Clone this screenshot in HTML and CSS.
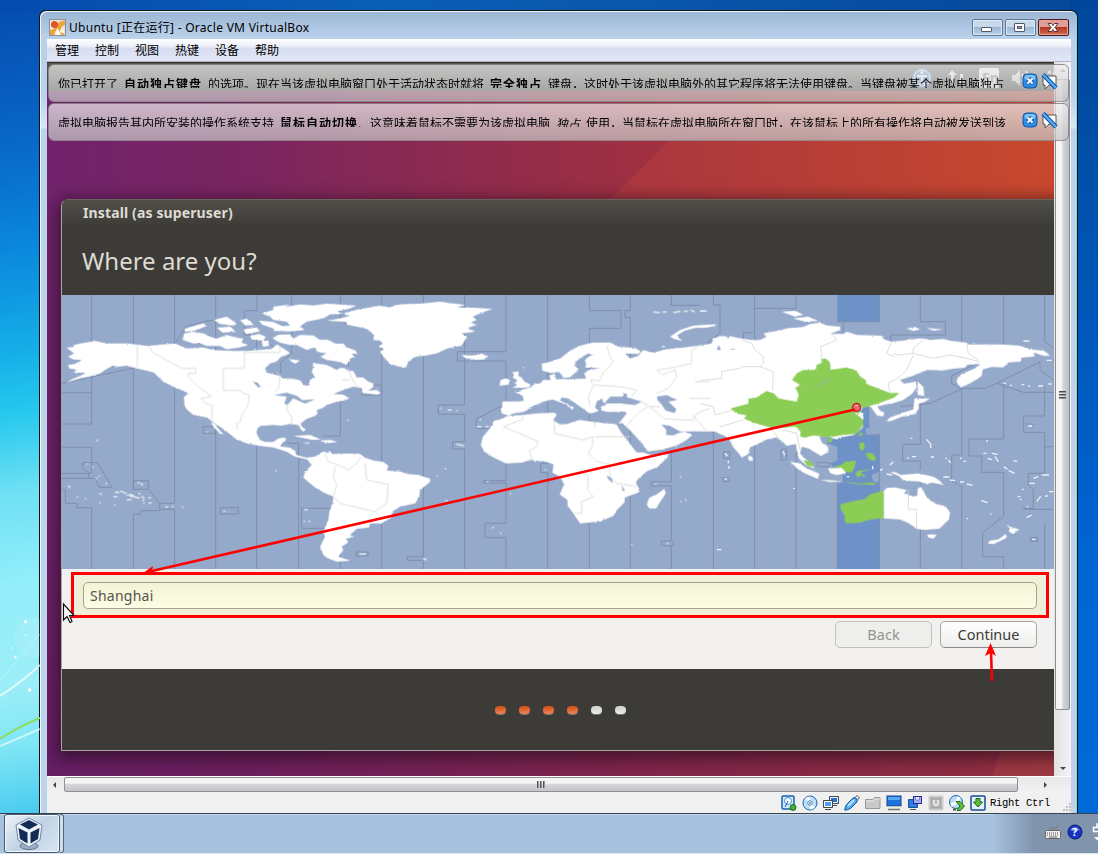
FILE: index.html
```
<!DOCTYPE html>
<html lang="zh-CN">
<head>
<meta charset="utf-8">
<title>Ubuntu - Oracle VM VirtualBox</title>
<link rel="stylesheet" href="styles.css">
</head>
<body>
<main class="desktop">
  <svg class="wallpaper" width="40" height="813" viewBox="0 0 40 813">
    <circle cx="34" cy="638" r="20" fill="#fff" opacity=".1"/>
    <g fill="none" stroke="#fff">
      <path d="M0 680Q18 660 40 634" opacity=".3"/><path d="M0 696Q22 682 40 665" stroke-width="2" opacity=".7"/><path d="M0 746Q20 738 40 729" stroke-width="2" opacity=".6"/>
    </g>
    <path d="M0 739Q18 727 40 718" fill="none" stroke="#8fdc58" stroke-width="2"/>
    <g fill="#fff"><circle cx="25.500" cy="621.500" r="1.600"/><circle cx="29.500" cy="690" r="1.800"/><circle cx="15.500" cy="657" r="1.200"/><circle cx="12" cy="648" r=".8"/><circle cx="26" cy="635" r=".8"/></g>
  </svg>
  <section class="window">
    <header class="titlebar">
      <svg class="app-icon" width="17" height="17" viewBox="0 0 17 17"><rect x=".5" y=".5" width="16" height="16" fill="#eee6dc" stroke="#8a8e96"/><path d="M1 16V11Q5 11 8 6Q11 1 16 2V6Q12 7 12 10Q12 13 16 16H12Q10 10 8 10Q6 13 5 16Z" fill="#eda33c"/><path d="M8 16Q6 12 9 9Q9 13 12 16Z" fill="#fff"/><circle cx="5.500" cy="5.500" r="3.500" fill="#df5429"/><circle cx="13" cy="12" r="2" fill="#fff6e0"/></svg>
      <h1>Ubuntu [正在运行] - Oracle VM VirtualBox</h1>
      <div class="controls">
        <button class="ctl"><svg width="29" height="15" viewBox="0 0 29 15"><rect x="9.500" y="7.500" width="10" height="4" rx=".5" fill="#fff" stroke="#50586e"/></svg></button>
        <button class="ctl"><svg width="29" height="15" viewBox="0 0 29 15"><rect x="9.500" y="3.500" width="10" height="8" rx=".5" fill="#fff" stroke="#50586e"/><rect x="12.500" y="6.500" width="4" height="2" fill="#8fa6c6" stroke="#50586e"/></svg></button>
        <button class="ctl close"><svg width="29" height="15" viewBox="0 0 29 15"><path d="M10 3.500h3.500l1.500 2 1.500-2H20l-3 4 3 4h-3.500l-1.500-2-1.500 2H10l3-4z" fill="#fff" stroke="#5c2f38"/></svg></button>
      </div>
    </header>
    <nav class="menubar"><span>管理</span><span>控制</span><span>视图</span><span>热键</span><span>设备</span><span>帮助</span></nav>
    <div class="client">
      <div class="guest">
        <div class="panel">
          <svg width="145" height="29" viewBox="0 0 145 29">
            <circle cx="13" cy="15" r="10" fill="#3c80c8"/><g stroke="#fff" stroke-width="2" fill="none"><circle cx="13" cy="15" r="8" stroke-width="1"/><path d="M8 13h10M13 12v6l-3 4M13 18l3 4"/></g><circle cx="13" cy="9.500" r="1.600" fill="#fff"/>
            <path d="M43 7l5 5h-3v9h-3v-9h-3zM51 11h3v10h-3z" fill="#eee"/>
            <rect x="70" y="5" width="20" height="20" rx="2" fill="#f2f2f2"/><text x="73" y="20" class="lang">En</text>
            <path d="M103 12h3l5-5v16l-5-5h-3z" fill="#ddd"/><g fill="none" stroke="#ddd" stroke-width="2"><path d="M113 11q3 4 0 8M117 8q5 7 0 14"/></g>
            <circle cx="142" cy="14" r="5" fill="none" stroke="#ddd" stroke-width="3" stroke-dasharray="3 2"/>
          </svg>
        </div>
        <section class="dialog">
          <header class="dialog-head"><h2>Install (as superuser)</h2><h3>Where are you?</h3></header>
          <svg class="map" width="992" height="274" viewBox="6 15 2976 822" preserveAspectRatio="none">
            <defs><filter id="coast" x="0" y="0" width="3000" height="860" filterUnits="userSpaceOnUse"><feTurbulence type="fractalNoise" baseFrequency=".11" numOctaves="3" seed="4" result="n"/><feDisplacementMap in="SourceGraphic" in2="n" scale="6" xChannelSelector="R" yChannelSelector="G"/></filter></defs>
            <rect x="6" y="15" width="2976" height="822" fill="#95a9ca"/>
            <path d="M2332 15H2458V95H2332ZM2410 345H2428V415H2418V435H2458V545L2435 555L2440 575H2458V837H2332V578L2350 575L2348 560L2310 520L2332 512V470L2300 460L2310 430L2390 410Z" fill="#6e92c8"/>
            <g class="zones">
              <path d="M95 15V402H6M6 308H95M6 472H95V550H6M6 565H105L118 592H156L112 518H68V535L86 548V565M6 600H16V640H50V653H95V837M220 15V598H265V572H220V598M265 598L299 640H344V15M299 640V662H243V672H220V837M344 658V837M299 658H344M467 15V837M591 15V62H553V135H590V837M695 15V190L662 218V250M591 135L660 185M841 15V90L870 110M841 330V438H790M965 15V837M841 700V837M716 590V837M716 500V590M716 460V500M716 460H680M430 410H465V430H430ZM6 280L230 232M480 653H535V672H480ZM725 655H815V715H725ZM888 786H924V798H888ZM345 160L378 110L430 95L465 90M640 90V70M865 230V205L890 185M905 285H965V315H905V285"/>
              <path transform="translate(960)" d="M130 15V800H82V811H130V837M254 15V345H175V373H254V455H218V477H254V837M378 15V185H232V213H378V340L288 388V415H330M378 415V572H310V579H378V700H315V743H378V837M503 15V520H482V548H503V837M628 15V62H723V115H628V837M751 15V62H735V82H751V837M874 15V46H960M874 485V575H813V588H874V753H845V767H880V753M874 767V837M980 165L1000 145"/>
              <path transform="translate(1920)" d="M40 15V45H60V130L20 160M40 420V837M164 15V150M288 15V55H164M164 440V837M288 480V837M130 150V128H160M412 95H430V130M538 15V95H412M538 430V837M412 575V837M661 15V95H736V135H572V155M661 340V463H608V513H661V540M661 550V837M785 15V160M785 297V495H755V573L785 590V837M911 15V165M911 280V447H807V498H845V547H911V678L848 728V800H911V837M1034 15V155L1060 175M1034 290V378H971V427H1034V550H985V585L1000 600V655H970V658H1062M1034 470H1060M1034 700V837M785 297L755 280V258L840 215M785 297L690 340L600 350M785 295H855L890 280L1020 215V240L1062 270M890 280L970 307H1062M978 402H998V413M415 435H538M245 477H260V510H243V477M352 518V530H388V518ZM68 563H88V575H68ZM992 743H1013V754H992ZM70 485H90V505H70Z"/>
            </g>
            <g class="land" filter="url(#coast)">
              <path d="M20 173L40 171 42 165 62 160 105 153 140 160 200 160 265 168 300 164 345 160 380 175 430 172 458 180 510 183 560 183 600 180 635 177 650 163 670 175 685 185 690 190 662 201 650 215 630 220 615 235 620 248 660 258 668 265 700 265 722 272 730 285 745 288 750 270 765 262 755 245 760 232 758 219 780 222 800 225 830 240 842 233 855 235 865 243 880 243 890 262 910 262 925 275 940 280 940 290 925 302 950 300 962 309 953 314 907 309 905 294 880 290 850 300 820 312 850 314 868 325 850 332 830 335 800 345 785 355 770 360 773 370 765 378 740 387 722 400 725 409 738 420 728 425 715 405 690 402 665 407 640 405 600 408 591 420 590 430 600 450 615 456 640 456 655 445 675 442 678 450 665 460 661 469 690 473 705 482 708 495 740 503 765 500 755 510 735 507 705 500 680 485 640 472 600 468 560 460 530 448 500 425 480 410 470 405 458 395 440 382 400 375 380 358 373 345 372 320 385 310 365 300 350 295 310 275 300 265 280 247 260 242 230 235 200 227 175 230 158 227 135 240 120 250 90 259 65 264 35 273 20 277 35 268 60 258 78 248 40 248 50 240 28 235 24 225 45 222 66 210 40 208 24 200 42 190Z"/>
              <path d="M452 395L465 402 478 420 492 433 480 430 462 413ZM368 150L372 131 397 125 430 130 450 140 470 146 500 135 530 143 550 145 545 158 565 165 538 172 500 178 480 168 440 168 422 160 400 160ZM374 116L430 100 440 108 405 122 375 125ZM462 90L500 80 530 100 522 107 480 102ZM470 113L510 110 528 124 488 128ZM540 90L560 86 582 105 555 106ZM550 118L590 112 600 124 558 132ZM570 137L598 132 617 140 610 152 575 148ZM605 70L640 60 680 50 720 43 760 46 800 41 850 44 890 47 865 57 830 64 850 71 810 73 790 85 740 95 720 110 735 120 690 124 640 123 645 110 690 107 680 95 640 90 630 80ZM598 92L640 96 675 112 640 115 605 103ZM637 145L655 134 690 133 700 146 720 135 760 136 780 150 803 149 825 160 850 161 857 171 886 181 892 190 875 192 885 201 870 207 860 225 840 216 800 210 780 200 800 190 772 186 765 172 740 180 710 165 690 165 660 158ZM685 207L720 211 705 222ZM604 151L625 152 628 168 610 170ZM640 50L690 43 670 53 640 60ZM375 295L388 308 360 298ZM700 438L750 435 782 448 758 450ZM780 451L812 450 832 456 797 460ZM728 458L748 457 745 461Z"/>
              <path d="M840 85L870 78 850 70 890 59 960 47 990 52 1012 43 1050 42 1080 41 1140 35 1215 45 1190 53 1240 53 1297 57 1258 71 1238 80 1250 90 1232 97 1250 104 1222 115 1247 125 1204 130 1222 141 1212 154 1204 167 1162 175 1130 190 1090 198 1065 200 1045 215 1038 232 1018 230 990 222 970 200 960 185 973 177 955 170 968 160 960 152 940 150 942 135 920 116 860 104 860 96 800 92Z"/>
              <path d="M740 507L765 500 787 486 812 484 815 492 870 490 900 492 915 503 940 511 970 516 985 527 981 542 1020 544 1042 552 1075 555 1110 566 1110 576 1080 600 1078 620 1065 640 1020 650 997 665 993 683 965 700 930 700 927 712 890 717 870 735 882 740 860 746 864 758 845 770 850 780 835 800 872 812 830 815 800 803 790 795 780 770 795 740 790 725 805 690 808 665 818 640 820 620 790 607 765 592 750 580 730 563 736 544 755 525Z"/>
              <path transform="translate(960)" d="M245 195L280 197 305 191 326 199 312 208 280 210 255 204ZM358 287L362 270 376 265 390 270 386 284ZM395 247L416 244 415 258 425 263 434 275 452 284 448 292 398 294 412 284 402 280 413 272 398 262 403 255Z"/>
              <path transform="translate(960)" d="M403 304L420 304 427 298 452 292 463 282 480 280 490 270 513 270 508 257 524 250 528 268 552 267 568 268 600 266 618 266 612 249 630 238 660 236 643 233 616 233 618 220 614 210 630 197 640 197 625 190 609 199 588 214 583 228 597 238 580 253 569 262 550 263 537 246 512 249 487 242 485 221 512 215 543 204 570 182 600 167 636 158 690 157 715 170 765 174 782 184 775 192 735 190 750 205 775 198 790 180 820 189 855 178 900 174 960 166 1005 159 1015 170 1010 180 1065 178 1040 160 996 158 997 145 1020 140 1045 145 1050 138 1070 143 1110 150 1140 150 1160 140 1150 130 1205 120 1220 115 1270 111 1290 102 1320 98 1340 106 1380 110 1381 120 1350 132 1390 132 1400 125 1430 135 1505 137 1512 148 1535 155 1575 151 1590 147 1628 145 1650 150 1690 147 1710 152 1760 158 1765 163 1860 163 1920 167 1950 178 1992 182 2010 197 1993 198 1960 187 1965 199 1925 203 1922 215 1885 217 1870 232 1835 231 1808 238 1805 258 1775 278 1742 292 1733 282 1730 268 1745 252 1790 233 1800 222 1762 224 1755 233 1720 236 1690 241 1640 240 1600 257 1560 270 1572 281 1607 275 1610 292 1597 310 1570 330 1535 341 1524 342 1488 350 1493 361 1510 368 1511 378 1493 378 1488 362 1478 350 1450 350 1438 365 1450 370 1450 388 1440 395 1449 404 1448 413 1423 435 1380 442 1370 448 1327 435 1319 442 1326 459 1343 468 1346 485 1323 498 1305 487 1287 476 1265 470 1260 491 1280 510 1297 522 1303 535 1280 527 1257 506 1250 480 1248 462 1220 468 1210 457 1190 442 1160 448 1130 463 1110 472 1105 492 1085 503 1077 491 1060 472 1048 450 1035 438 1015 430 1005 424 980 424 900 424 870 408 844 403 859 420 858 435 880 436 897 429 913 425 937 435 920 450 893 465 850 478 803 484 790 465 773 446 752 423 727 399 715 402 740 370 735 365 685 366 665 362 662 350 680 344 670 338 666 325 650 335 645 352 655 362 642 368 628 370 613 358 600 350 587 340 565 325 545 322 540 331 565 344 582 352 577 360 561 345 535 335 517 328 490 335 455 350 440 361 430 366 398 370 387 378 366 370 364 360 368 334 413 334 431 333 428 318Z"/>
              <path transform="translate(960)" d="M338 400L342 392 362 388 382 378 430 375 470 370 528 368 529 378 519 390 540 404 562 402 575 397 600 390 640 396 660 398 708 402 724 428 745 454 760 475 770 487 790 487 813 495 865 491 862 502 834 530 800 544 773 568 767 578 777 595 776 607 735 622 733 637 711 660 700 678 660 694 600 700 580 670 563 648 562 630 539 613 552 583 540 560 517 548 521 523 500 516 450 510 425 518 378 520 340 502 313 485 302 465 309 440 329 416ZM853 596L857 610 828 655 808 655 800 643 808 623 830 613Z"/>
              <path transform="translate(1920)" d="M653 274L670 291 673 318 653 315ZM643 326L690 325 675 335 656 341 656 355 647 370 629 377 605 380 576 392 558 395 570 382 610 368 640 358 642 338ZM510 348L530 346 540 362 553 368 548 379 530 375ZM35 158L52 155 60 138 81 139 80 152 95 160 108 142 120 160 100 175 65 185 58 168 38 165ZM144 498L157 500 159 513 145 510ZM270 515L300 520 320 535 358 551 354 567 315 550 292 536ZM360 569L400 571 430 576 385 575ZM384 535L440 532 436 552 407 555 390 549ZM570 547L585 546 602 555 655 550 700 560 718 571 730 585 696 578 682 582 655 574 611 572 596 558ZM620 115L645 111 660 118 640 123ZM678 114L730 118 700 122ZM245 65L285 62 310 74 285 80ZM278 85L325 80 355 93 315 95ZM870 752L895 748 918 732 920 743 882 762 863 760ZM918 703L930 710 958 718 940 732 925 724 930 716ZM681 733L710 733 700 746 685 742ZM50 103L20 104 -20 107 -60 120 -90 140 -78 147 -52 153 -64 143 -68 135 -45 122 -15 114 20 113 45 108Z"/>
              <path transform="translate(1920)" d="M551 603L560 594 585 592 620 600 612 611 640 619 652 617 653 596 662 590 673 607 680 622 708 642 735 648 750 666 747 688 718 716 675 720 650 717 627 700 600 688 551 685Z"/>
              <g fill="#8ccd57">
                <path transform="translate(1920)" d="M91 355L145 341 145 326 170 322 200 303 222 310 235 325 290 335 296 315 287 293 300 285 276 270 290 250 310 240 347 240 350 225 366 217 363 207 378 206 390 217 392 240 440 232 470 243 480 260 497 270 499 282 534 295 570 309 598 309 582 323 535 340 493 353 472 350 485 361 472 375 488 388 490 405 468 432 430 435 385 442 340 436 315 443 300 440 302 426 290 412 285 410 220 415 160 398 132 385 140 376 110 370Z"/>
                <path transform="translate(1920)" d="M420 643L440 638 478 630 495 627 510 613 538 605 551 603V687L535 685 500 691 480 698 437 700 433 675 422 657ZM310 510L332 514 342 530 322 528ZM382 447L400 445 393 457 383 456ZM475 435L485 426 488 435 480 438ZM478 459L493 457 494 472 487 482 478 475ZM398 530L425 524 437 514 467 512 463 532 455 548 435 544 425 534ZM470 544L515 536 480 548 500 561 480 557 475 563 468 555ZM495 490L515 488 528 503 522 514 505 505ZM430 575L475 580 530 578 520 585 460 582Z"/>
              </g>
            </g>
            <g class="water">
              <path d="M578 275L593 278 603 292 594 291ZM642 315L680 308 712 318 726 330 765 328 735 341 700 325 681 345 673 340 680 320ZM720 175L755 190 750 205 715 200Z"/>
              <path transform="translate(960)" d="M831 320L860 315 892 330 865 335 889 357 884 369 857 362 845 344 832 330ZM672 341L691 320 725 320 732 315 728 308 742 313 740 321 785 335 765 345 720 340ZM680 556L695 565 699 580 685 568ZM724 585L735 602 728 603Z"/>
              <path transform="translate(1920)" d="M342 286Q370 285 392 263Q388 280 342 288Z"/>
            </g>
            <g class="borders">
              <path d="M232 165V232M268 170L278 187 310 205 365 235H407V250H385V260L415 290 430 300 453 320 423 325 435 340 456 345V390M553 187H660V170M553 187V235H490V301H540L550 310 568 315 563 350 548 368 540 395 530 400 532 420M652 245L660 265 655 295 645 303M685 340L680 360 695 380V405M865 235L875 265 895 295M845 270H870M795 490L805 515 835 525 865 540 890 520 902 500M825 530L820 560 830 585 820 620M915 520L920 570 985 583 980 640 945 665 840 640 820 620"/>
              <path transform="translate(960)" d="M425 378L430 388 370 410 475 455 470 470 448 482 458 510M523 388V430L610 450 638 440V465L625 490 650 515 688 523 690 560 710 580 770 590M645 395V410M645 440H750M610 550L625 560 622 600 640 620 605 635V670H580M680 167L690 200 700 215 668 250 660 272 630 270 640 285 720 290 770 300 755 320M640 285L625 320 630 350M785 335L810 350H840M740 405L780 365 803 350M810 350L850 385 900 390H940L950 370 990 355M960 165L935 180V220L870 235 830 240 845 255 885 240 890 260 865 295 830 310M945 275H990M930 325H990M935 375L960 400 980 424"/>
              <path transform="translate(1920)" d="M0 272L65 265V245L120 235 125 230H180L190 220 190 200 165 180 155 160 125 150M180 230L220 245 218 300M395 130L410 150 362 170 365 215M560 190L575 155M580 190L600 195 640 190V175L670 150M640 190L700 205 750 195 800 205 840 215M800 160L805 190 835 210M640 195L620 240 600 260 565 280 570 310M0 340L40 350 45 375 100 360M60 410L130 390M625 600V658H650V717M560 190L585 200M212 415L240 450M250 420L290 430 300 480"/>
            </g>
            <g class="islands">
              <path d="M80 522h4M97 532h4M116 558h4M107 565h4M137 580h4M24 588l8 4M118 610l8 4M232 576l5 4M240 580l10 5M50 621h4M74 626h4M118 639h4M162 645h4M165 607h12M180 605h10M190 609h10M200 615h10M210 619h10M225 622h8M200 629h15M160 620h12M235 611h6M232 624h8M247 631h5M265 623h8M250 640h4M265 639h10M316 651h8M335 650h5M365 651h5M490 664h5M732 659h12M730 695h5M745 694h5M898 792h20M110 451h5M645 542h5M862 391h4M210 612l18 10M245 618l8 8M440 426h4"/>
              <path transform="translate(960)" d="M179 355h4M203 360h12M229 362h4M299 388h4M290 410h15M315 410h12M229 462l22 6M194 536h5M170 558h4M320 575h5M389 610h4M195 632h8M336 713h5M360 730h4M130 808h10M494 539h5M753 764h4M860 760h5M825 582h4M899 560h4M900 635h4M915 630h5M820 66l20 2M848 66h12M880 68l20-4M910 65l14 -2M932 60l12 6M845 170h10M428 233h4"/>
              <path transform="translate(1920)" d="M75 490l7 8M85 512v8M87 528v8M74 567h6M249 484l5 12M50 779h14M280 595h5M570 525l10 -10M680 448l12 15v12M632 445h5M622 504h5M636 500h12M692 501h10M736 505h5M745 510l8 8M800 686h4M843 632l20 6M859 453h5M850 490h10M863 505l13 4M875 490l18 3M885 500l10 15M940 512l12 2M912 530l10 8M926 542l18 8M985 408h12M970 153h18M965 284h8M985 288h5M1015 288h14M1045 282h10M910 280h8M930 286h6M780 505h5M790 514h8M730 561h18M540 542l8-6M560 552l16 3M750 570l15 2M780 576h12M953 620h8M960 628h5M966 598h5M987 580h18M980 650h5M980 683l15 -8M1000 565l15 -5M1025 555h22M1010 635l12 -16M1035 618h8M1047 605h13M800 582l18 4M870 672h4M996 748h10M0 63h20M1040 211h15M440 560h8M518 528v10"/>
            </g>
          </svg>
          <div class="form">
            <div class="highlight"><input class="entry" value="Shanghai"></div>
            <div class="buttons"><button class="btn disabled">Back</button><button class="btn">Continue</button></div>
          </div>
          <footer class="dots"><i class="on"></i><i class="on"></i><i class="on"></i><i class="on"></i><i></i><i></i></footer>
        </section>
      </div>
      <div class="vscroll"><b class="arrow up"></b><div class="vthumb"><i></i><i></i><i></i></div><b class="arrow down"></b></div>
      <div class="hscroll"><b class="arrow left"></b><div class="hthumb"><i></i><i></i><i></i></div><b class="arrow right"></b></div>
      <div class="notices">
        <div class="notice"><p>你已打开了<b>自动独占键盘</b>的选项。现在当该虚拟电脑窗口处于活动状态时就将<b class="w4">完全独占</b>键盘，这时处于该虚拟电脑外的其它程序将无法使用键盘。当键盘被某个虚拟电脑独占</p>
          <svg class="tools" width="36" height="18" viewBox="0 0 36 18"><rect x="1" y="1" width="14" height="14" rx="4" fill="#2e8de2" stroke="#0b55a8"/><rect x="2.500" y="2" width="11" height="5" rx="2.500" fill="#7cc4f7"/><path d="M5.500 5.500l5 5M10.500 5.500l-5 5" stroke="#1c5ba6" stroke-width="4"/><path d="M5.500 5.500l5 5M10.500 5.500l-5 5" stroke="#fff" stroke-width="2"/><path d="M21 3h13v9h-7l-4 4v-4h-2z" fill="#fff" stroke="#555"/><path d="M21 1.500L34 15" stroke="#0a4e9e" stroke-width="4.500"/><path d="M21 1.500L34 15" stroke="#55aef2" stroke-width="2.500"/></svg></div>
        <div class="notice"><p>虚拟电脑报告其内所安装的操作系统支持<b>鼠标自动切换</b><span class="dot">.</span>这意味着鼠标不需要为该虚拟电脑<em>独占</em>使用，当鼠标在虚拟电脑所在窗口时，在该鼠标上的所有操作将自动被发送到该</p>
          <svg class="tools" width="36" height="18" viewBox="0 0 36 18"><rect x="1" y="1" width="14" height="14" rx="4" fill="#2e8de2" stroke="#0b55a8"/><rect x="2.500" y="2" width="11" height="5" rx="2.500" fill="#7cc4f7"/><path d="M5.500 5.500l5 5M10.500 5.500l-5 5" stroke="#1c5ba6" stroke-width="4"/><path d="M5.500 5.500l5 5M10.500 5.500l-5 5" stroke="#fff" stroke-width="2"/><path d="M21 3h13v9h-7l-4 4v-4h-2z" fill="#fff" stroke="#555"/><path d="M21 1.500L34 15" stroke="#0a4e9e" stroke-width="4.500"/><path d="M21 1.500L34 15" stroke="#55aef2" stroke-width="2.500"/></svg></div>
      </div>
    </div>
    <footer class="status">
      <svg width="16" height="16" viewBox="0 0 16 16"><rect x="1" y="1" width="12" height="13" rx="1" fill="#d4e9fb" stroke="#1762ad" stroke-width="1.500"/><circle cx="7" cy="6" r="3.500" fill="#fff" stroke="#4691d4"/><path d="M7 6l-3 6" stroke="#1762ad"/><circle cx="12" cy="12.500" r="3" fill="#45ad3c" stroke="#1b6d1c"/></svg>
      <svg width="16" height="16" viewBox="0 0 16 16"><circle cx="8" cy="8" r="7" fill="#bfe0fa" stroke="#1762ad"/><path d="M8 8L3 3.500A7 7 0 0 1 8 1.500ZM8 8l5 4.500A7 7 0 0 1 8 14.500Z" fill="#fff"/><circle cx="8" cy="8" r="2.300" fill="#fff" stroke="#4a8dce"/><circle cx="8" cy="8" r=".8" fill="#222"/></svg>
      <svg width="16" height="16" viewBox="0 0 16 16"><path d="M6.500 1.500h9v7h-9z" fill="#2271cf" stroke="#474747"/><path d="M7.500 2.500h7v5h-7z" fill="none" stroke="#fff"/><path d="M9 10.500h5" stroke="#474747"/><path d="M.500 5.500h9v7h-9z" fill="#4a9df0" stroke="#474747"/><path d="M1.500 6.500h7v5h-7z" fill="none" stroke="#fff"/><path d="M2 14.500h6" stroke="#474747"/></svg>
      <svg width="16" height="16" viewBox="0 0 16 16"><path d="M10 4l3-3.500 2.500 2.500L12 6z" fill="#fff" stroke="#555"/><path d="M2.500 9.500L9 3q2-1 3.500.500T13 7L6.500 13.500Q3 15 .8 15.200Q1 12 2.500 9.500Z" fill="#54acef" stroke="#15569f"/><path d="M4 11l6-6" stroke="#bfe4ff" stroke-width="1.800"/></svg>
      <svg width="16" height="16" viewBox="0 0 16 16"><path d="M.500 13.500V4.500h7l2-2h5.500v11z" fill="#c9c9c9" stroke="#999"/><path d="M1 6h7l2-2h5" stroke="#e8e8e8" fill="none"/></svg>
      <svg width="16" height="16" viewBox="0 0 16 16"><rect x="1" y="1" width="14" height="10" fill="#1c72dc" stroke="#14438a"/><path d="M2 2h12v3H2z" fill="#56a9f4"/><path d="M.500 12.500h15" stroke="#e8ebe0" stroke-width="2"/><path d="M2 14.500h12" stroke="#727a70" stroke-width="1.500"/></svg>
      <svg width="16" height="16" viewBox="0 0 16 16"><path d="M1.500 4.500h9v8h-9z" fill="#2c7fe0" stroke="#1d4f9a"/><rect x="6.500" y="1.500" width="8" height="7" fill="#aab0f4" stroke="#262c99"/><path d="M8.500 2v3h4V2" fill="#eef" stroke="#5d66c4" stroke-width=".7"/><path d="M3 14.500h6" stroke="#555"/></svg>
      <svg width="16" height="16" viewBox="0 0 16 16"><rect x="1.500" y="1.500" width="13" height="13" fill="none" stroke="#aaa" stroke-dasharray="1 1" stroke-width="2"/><rect x="3" y="3" width="10" height="10" fill="#b6b6b6" stroke="#999"/><path d="M6 5v4q2 3 4 0V5" fill="none" stroke="#fff" stroke-width="1.300"/></svg>
      <svg width="16" height="16" viewBox="0 0 16 16"><circle cx="7" cy="7" r="6.500" fill="#b7dcfb" stroke="#2864a5"/><path d="M2 10Q8 9 10 2" stroke="#fff" stroke-width="3" fill="none"/><path d="M7 6.500h4l4.500 4.500-4 4.500H8l3-4.500z" fill="#67bc35" stroke="#226d1c"/><path d="M4 14.500h3" stroke="#555" stroke-width="2"/></svg>
      <svg width="16" height="16" viewBox="0 0 16 16"><rect x="1" y="1" width="14" height="14" rx="1" fill="#e1f0fc" stroke="#164e90" stroke-width="1.500"/><path d="M6 3.500h4V7h2.500L8 12 3.500 7H6z" fill="#5fc037" stroke="#1d651b"/></svg>
      <span class="hostkey">Right Ctrl</span>
      <svg class="grip" width="9" height="9" viewBox="0 0 9 9"><path d="M7 1h2M4 4h2M7 4h2M1 7h2M4 7h2M7 7h2" stroke="#b2b2b2" stroke-width="1.500"/></svg>
    </footer>
  </section>
</main>
<footer class="taskbar">
  <button class="task"><svg width="30" height="34" viewBox="0 0 30 34"><ellipse cx="15" cy="29" rx="9" ry="3.500" fill="#9cadc4" stroke="#60728f"/><path d="M15 1L28 8 26 23 15 30 4 23 2 8Z" fill="#edf2f8" stroke="#7186aa"/><path d="M15 3L24 7.500 15 12.500 6 7.500ZM4.500 11L13.500 15.500V26.500L6 22ZM25.500 11L16.500 15.500V26.500L24 22Z" fill="#132c54"/></svg></button><i class="stack"></i>
  <div class="tray">
    <svg width="16" height="14" viewBox="0 0 16 14"><path d="M5 5Q4 2 8 3T13 0" stroke="#777" fill="none"/><rect x=".5" y="5.500" width="15" height="8" rx="1" fill="#eee" stroke="#666"/><path d="M2 8h12M2 10h12" stroke="#555" stroke-dasharray="1 1"/><path d="M4 12h8" stroke="#666"/></svg>
    <svg width="16" height="16" viewBox="0 0 16 16"><circle cx="8" cy="8" r="7" fill="#1533c4" stroke="#091a6c"/><path d="M3 6Q8 0 13 6Q8 8 3 6" fill="#6986ec"/><text x="5" y="12" class="help">?</text></svg>
    <svg class="langbar" width="9" height="18" viewBox="0 0 9 18"><path d="M1.500 4.500h9v4h-9zM5 4V1h5" fill="none" stroke="#fff" stroke-width="1.500"/><path d="M2 14h7l-3.500 3.500z" fill="#fff"/></svg>
  </div>
</footer>
<svg class="annotations" width="1098" height="854" viewBox="0 0 1098 854">
  <path d="M856.500 411v4" stroke="#ddd" stroke-width="2"/><circle cx="856.500" cy="407.500" r="4" fill="#ee6b70" stroke="#c3262c" stroke-width="1.500"/><path d="M855 405.500h3" stroke="#ffc5c6"/>
  <path d="M855 409.500L152 571M992 681L991 652" stroke="#f00" stroke-width="2.600"/>
  <path d="M143 573L153 566l-1 5 8 3ZM990.500 643L996 656l-5-3-6 3Z" fill="#f00"/>
  <path d="M63.500 604V620L67 616.500 70 622.500 72 621.500 69.500 615.500H74Z" fill="#fff" stroke="#111" stroke-width="1.200"/>
</svg>
</body>
</html>
```
FILE: styles.css
```
* { box-sizing: border-box; }
body { margin: 0; width: 1098px; height: 854px; overflow: hidden; position: relative; font: 12px "Noto Sans", "Noto Sans CJK SC", sans-serif; color: #000; }
h1, h2, h3, p { margin: 0; font-weight: normal; }
button { padding: 0; margin: 0; font: inherit; }
svg { display: block; flex: none; }

.desktop {
  position: relative; height: 813px; padding: 10px 20px 0 39px;
  background:
    linear-gradient(180deg, #00479a, #014fa6 150px, #0059bd 350px, #0065d2 560px, #006ad8) 1070px 0 / 28px 813px no-repeat,
    linear-gradient(90deg, #054baf, #0a5fb6 380px, #07489a 1070px) 0 0 / 1098px 12px no-repeat,
    linear-gradient(172deg, #054baf, #0868c8 145px, #0a88dd 250px, #15aee8 350px, #25c8ee 410px, #6fe0f4 490px, #92eefa 580px, #9ceef8 680px, #80e6f5 740px, #48caef 813px);
}
.wallpaper { position: absolute; left: 0; top: 0; }

.window {
  width: 1039px; height: 803px; display: flex; flex-direction: column; padding: 1px 6px 0 7px;
  border: 1px solid #111; border-bottom: 0; border-radius: 7px 7px 0 0;
  background: linear-gradient(#9ab6d3, #bad1eb 27px, #bad2ed 85px, #d8e7f5 117px, #bcd3ea 118px);
  box-shadow: inset 1px 1px #eef8ff, inset -1px 0 #7bd9ee;
}
.titlebar { height: 27px; display: flex; align-items: center; padding: 4px 2px 0; }
.app-icon { margin-right: 3px; }
.titlebar h1 { flex: 1; font-size: 12px; line-height: 16px; letter-spacing: .27px; white-space: nowrap; }
.controls { display: flex; gap: 2px; margin-bottom: 1px; }
.ctl { width: 31px; height: 17px; border: 1px solid #5f7594; border-radius: 2px; background: linear-gradient(#c8d9ec 48%, #9bb6d3 50%, #bbd5ec); box-shadow: inset 0 0 0 1px #dfebf7; }
.close { border-color: #4d1420; background: linear-gradient(#dea096 45%, #b63524 50%, #d26950); box-shadow: inset 0 0 0 1px #e7a69a; }
.ctl svg { margin-left: -1px; }
.menubar { height: 23px; display: flex; gap: 16px; padding-left: 8px; background: linear-gradient(#fff, #e9edf7 8px, #d7ddf0 9px, #e2e7f6); border-bottom: 1px solid #aeb2c2; line-height: 24px; }

.client { position: relative; display: grid; grid-template: 714px 17px / 1007px 17px; background: #f0f0f0; }
.guest {
  overflow: hidden; display: flex; flex-direction: column;
  background:
    linear-gradient(135deg, transparent 41px, rgba(255,110,50,.12) 42px) 563px 79px / 444px 58px no-repeat,
    linear-gradient(106deg, transparent 6px, rgba(255,120,80,.12) 7px) 946px 690px / 61px 24px no-repeat,
    linear-gradient(180deg, transparent 55%, rgba(90,25,90,.45)),
    linear-gradient(90deg, #70236c, #7a2560 20%, #a03040 60%, #c0432c);
}
.panel { height: 29px; flex: none; display: flex; justify-content: flex-end; background: linear-gradient(#55544d, #403f3a); border-top: 1px solid #333; }
.lang { font: bold 14px "Noto Sans", sans-serif; fill: #777; }
.dialog { width: 1010px; height: 552px; margin: 108px 0 0 14px; flex: none; border: 1px solid #aaa7a3; border-top-color: #66645d; border-radius: 7px 7px 0 0; background: #3c3b37; box-shadow: 0 4px 16px 4px rgba(30,8,24,.6); overflow: hidden; color: #dfdbd2; font-family: "Noto Sans", sans-serif; }
.dialog-head { height: 95px; padding: 4px 21px 0; background: linear-gradient(#504f49, #3c3b37 27px); }
.dialog-head h2 { font-size: 14px; line-height: 18px; font-weight: bold; letter-spacing: .13px; }
.dialog-head h3 { margin: 22px 0 0 -1px; font-size: 24px; line-height: 34px; letter-spacing: 0; }
.zones { fill: none; stroke: #7f8fae; stroke-width: 3; }
.land { fill: #fff; }
.water { fill: #95a9ca; }
.borders { fill: none; stroke: #d4d8d2; stroke-width: 2.5; }
.islands { fill: none; stroke: #eef3f6; stroke-width: 4; }

.form { width: 992px; height: 100px; padding: 3px 5px 0 9px; background: #f2f1ef; }
.highlight { width: 978px; height: 46px; padding: 7px 9px 0 9px; border: 3px solid #f00; background: #efefd9; }
.entry { display: block; width: 954px; height: 27px; padding: 0 6px; border: 1px solid #a3a28c; border-radius: 5px; background: linear-gradient(#f3f3d7, #fdfde4); color: #55534b; font: 14px "Noto Sans", sans-serif; outline: 0; letter-spacing: .25px; }
.buttons { display: flex; justify-content: flex-end; gap: 8px; padding: 3px 12px 0 0; }
.btn { width: 97px; height: 27px; padding-bottom: 2px; border: 1px solid #a8a6a2; border-bottom-color: #888; border-radius: 5px; background: linear-gradient(#fff, #ededeb); color: #3c3b37; font: 14.5px "Noto Sans", sans-serif; }
.disabled { border-color: #c3c1be; background: #eeeeec; color: #96948f; }
.dots { display: flex; gap: 13px; padding: 37px 0 0 432.5px; }
.dots i { width: 11px; height: 8px; border-radius: 4px; background: linear-gradient(#ccc, #eee); box-shadow: 0 1px #77746e; }
.dots .on { background: linear-gradient(#d04d14, #ee8158); }

.vscroll { display: flex; flex-direction: column; align-items: center; background: linear-gradient(90deg, #e2e2e2, #f3f3f3); }
.vthumb { width: 15px; height: 631px; display: flex; flex-direction: column; align-items: center; justify-content: center; gap: 1px; border: 1px solid #8e8f93; border-radius: 2px; background: linear-gradient(90deg, #f5f5f5 40%, #d5d6da 55%, #bebfc5); }
.vthumb i { width: 7px; height: 2px; background: #4b4b4b; border-bottom: 1px solid #999; }
.arrow { width: 0; height: 0; border: 3.5px solid transparent; }
.up { margin: 4px 0 7px; border-bottom-color: #777; }
.down { margin-top: auto; margin-bottom: 3px; border-top-color: #444; }
.hscroll { grid-column: span 2; padding-right: 17px; display: flex; align-items: center; border-top: 1px solid #fff; background: linear-gradient(#e7e7e7, #f3f3f3); }
.left { margin: 0 8px 0 3px; border-right-color: #444; }
.right { margin-left: auto; margin-right: 4px; border-left-color: #444; }
.hthumb { width: 954px; height: 15px; margin: -1px 0 0; display: flex; align-items: center; justify-content: center; gap: 1px; border: 1px solid #8e8f93; border-radius: 2px; background: linear-gradient(#f4f4f4 40%, #d5d6da 50%, #c5c5c8); }
.hthumb i { width: 2px; height: 7px; background: #555; border-right: 1px solid #999; }

.notices { position: absolute; left: 1px; top: 2px; width: 1021px; display: flex; flex-direction: column; gap: 1px; }
.notice { height: 38px; display: flex; align-items: flex-start; border: 1px solid rgba(115,105,110,.65); border-radius: 6px; padding: 9px 10px 0 9px; background: linear-gradient(rgba(240,240,240,.72), rgba(196,196,196,.72)); }
.notice p { width: 962px; height: 14px; overflow: hidden; white-space: nowrap; font: 12px/20px "Noto Sans CJK SC", sans-serif; display: flex; }
.notice b { width: 78px; margin: 0 6px; letter-spacing: 1px; }
.notice .w4 { width: 52px; }
.notice em { width: 24px; margin: 0 6px; }
.notice .dot { width: 6px; margin: 0 6px 0 -6px; }
.tools { margin: -1px 0 0 2px; }

.status { height: 20px; display: flex; align-items: center; gap: 5px; padding-left: 734px; background: #f0f0f0; }
.hostkey { margin-left: -1px; font: 10.5px "Liberation Mono", monospace; letter-spacing: -.3px; white-space: nowrap; }
.grip { margin-left: auto; margin-top: 8px; }

.taskbar { height: 41px; display: flex; background: #a7c0dd; border-top: 1px solid #35434f; border-bottom: 1px solid #dbe5ef; box-shadow: inset 0 1px #c3d7eb; }
.task { width: 56px; height: 39px; margin-left: 4px; display: flex; align-items: center; padding-left: 9px; border: 1px solid #44586e; border-radius: 3px; background: linear-gradient(135deg, #eef4fa, #c1d2e3 50%, #d8e6f3); box-shadow: inset 0 0 0 1px #f2f8fd; }
.stack { width: 4px; height: 39px; border: 1px solid #50667e; border-left: 0; border-radius: 0 3px 3px 0; background: #d1e0ef; }
.tray { margin-left: auto; width: 104px; display: flex; align-items: center; gap: 6px; padding: 0 0 4px 51px; background: linear-gradient(90deg, #a7c0dd, #8094ad 40px); overflow: hidden; }
.langbar { margin-left: 3px; }
.help { font: bold 11px "Noto Sans", sans-serif; fill: #fff; }
.annotations { position: absolute; left: 0; top: 0; pointer-events: none; }
```
